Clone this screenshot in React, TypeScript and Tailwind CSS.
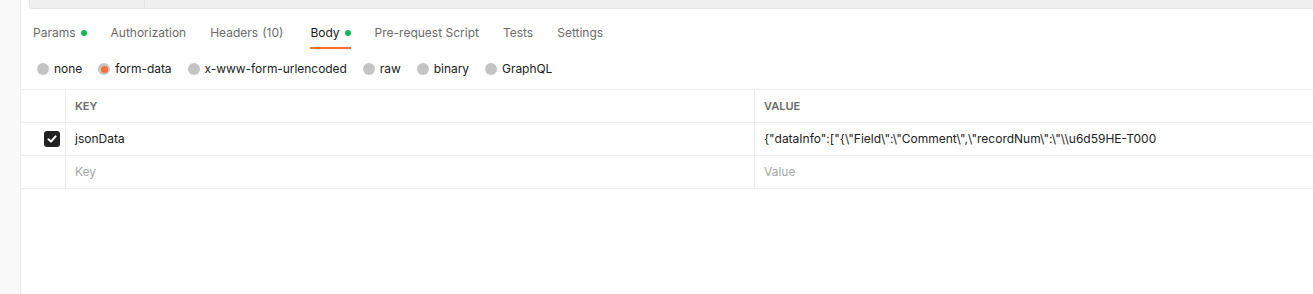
import React from "react";

const font = { fontFamily: "Inter, 'Noto Sans', sans-serif" };

function Tab({ label, active, dot, count }: { label: string; active?: boolean; dot?: boolean; count?: string }) {
  return (
    <div className="flex flex-col">
      <div className={`flex items-center h-[20px] leading-[20px] text-[12px] ${active ? "text-[#212121]" : "text-[#6b6b6b]"}`}>
        <span>{label}</span>
        {count && <span className="ml-[4px] mr-[3px]">{count}</span>}
        {dot && <span className="ml-[5px] w-[6px] h-[6px] rounded-full bg-[#0cbb52]" />}
      </div>
      <div className={`mt-[4px] h-[2px] ${active ? "bg-[#ff6c37]" : "bg-transparent"}`} />
    </div>
  );
}

function Radio({ label, checked }: { label: string; checked?: boolean }) {
  return (
    <div className="flex items-center gap-[5px]">
      <span className="w-[12px] h-[12px] rounded-full bg-[#c4c4c4] flex items-center justify-center">
        {checked && <span className="w-[7px] h-[7px] rounded-full bg-[#ff6c37]" />}
      </span>
      <span className="text-[12px] leading-[20px] text-[#212121] tracking-[-0.05px]">{label}</span>
    </div>
  );
}

export default function App() {
  return (
    <div className="w-full h-[294px] flex bg-white overflow-hidden" style={font}>
      <div className="w-[21px] shrink-0 bg-[#f9f9f9] border-r border-[#ededed]" />
      <div className="flex-1 flex flex-col min-w-0">
        <div className="ml-[8px] h-[9px] flex bg-[#f0f0f0] border-l border-b border-[#e3e3e3] rounded-bl-[4px]">
          <div className="w-[115px] border-r border-[#e3e3e3]" />
        </div>
        <div className="flex pl-[12px] pt-[14px] gap-[24px]">
          <Tab label="Params" dot />
          <Tab label="Authorization" />
          <Tab label="Headers" count="(10)" />
          <Tab label="Body" active dot />
          <Tab label="Pre-request Script" />
          <Tab label="Tests" />
          <Tab label="Settings" />
        </div>
        <div className="flex items-center h-[40px] pl-[16px] gap-[16px]">
          <Radio label="none" />
          <Radio label="form-data" checked />
          <Radio label="x-www-form-urlencoded" />
          <Radio label="raw" />
          <Radio label="binary" />
          <Radio label="GraphQL" />
        </div>
        <div className="border-t border-[#ededed]">
          <div className="flex h-[33px] border-b border-[#ededed]">
            <div className="w-[45px] shrink-0 border-r border-[#ededed]" />
            <div className="w-[689px] shrink-0 border-r border-[#ededed] flex items-center pl-[9px] text-[11px] font-semibold text-[#6b6b6b]">KEY</div>
            <div className="flex-1 flex items-center pl-[9px] text-[11px] font-semibold text-[#6b6b6b]">VALUE</div>
          </div>
          <div className="flex h-[33px] border-b border-[#ededed]">
            <div className="w-[45px] shrink-0 border-r border-[#ededed] flex items-center justify-end pr-[5px]">
              <span className="w-[16px] h-[16px] rounded-[3px] bg-[#212121] flex items-center justify-center">
                <svg width="10" height="10" viewBox="0 0 10 10">
                  <path d="M1.5 5.2 L4 7.6 L8.6 2.4" fill="none" stroke="white" strokeWidth="2" strokeLinecap="round" strokeLinejoin="round" />
                </svg>
              </span>
            </div>
            <div className="w-[689px] shrink-0 border-r border-[#ededed] flex items-center pl-[9px] text-[12px] text-[#212121]">jsonData</div>
            <div className="flex-1 flex items-center pl-[9px] text-[12px] text-[#212121] whitespace-nowrap overflow-hidden">{'{"dataInfo":["{\\"Field\\":\\"Comment\\",\\"recordNum\\":\\"\\\\u6d59HE-T000'}</div>
          </div>
          <div className="flex h-[33px] border-b border-[#ededed]">
            <div className="w-[45px] shrink-0 border-r border-[#ededed]" />
            <div className="w-[689px] shrink-0 border-r border-[#ededed] flex items-center pl-[9px] text-[12px] text-[#a6a6a6]">Key</div>
            <div className="flex-1 flex items-center pl-[9px] text-[12px] text-[#a6a6a6]">Value</div>
          </div>
        </div>
      </div>
    </div>
  );
}
